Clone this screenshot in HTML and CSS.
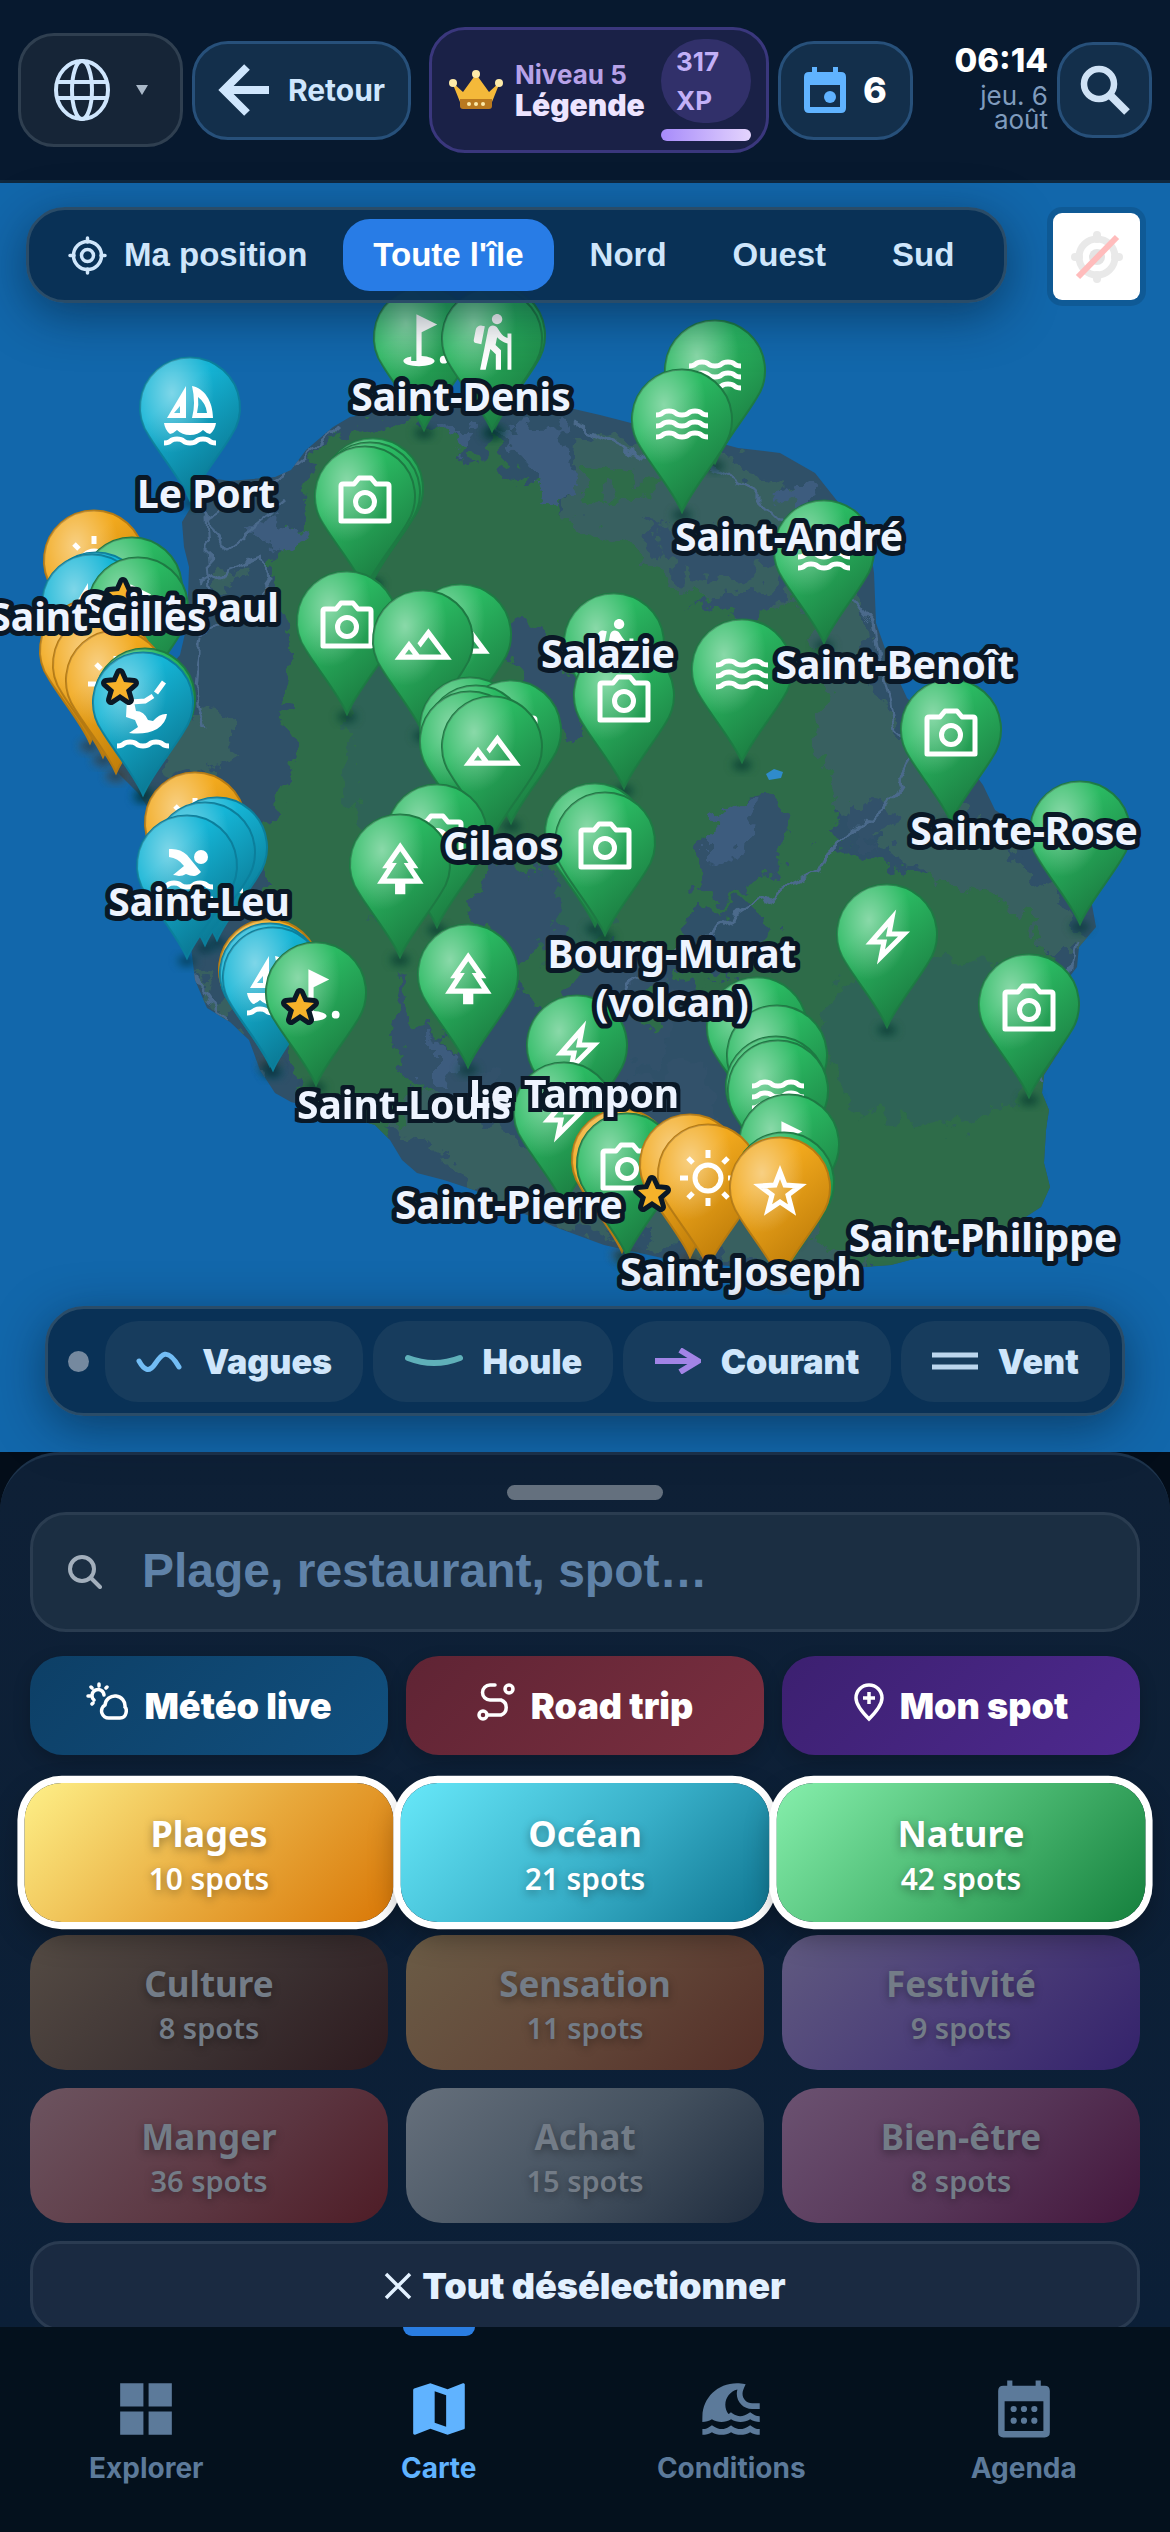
FILE: index.html
```html
<!DOCTYPE html>
<html lang="fr">
<head>
  <meta charset="UTF-8">
  <meta name="viewport" content="width=device-width, initial-scale=1">
  <title>Carte</title>
  <link rel="stylesheet" href="styles.css">
</head>
<body>

<header class="topbar">
  <button class="chip lang" aria-label="Langue">
    <svg width="56" height="64" viewBox="0 0 56 64" fill="none" stroke="currentColor" stroke-width="4">
      <ellipse cx="28" cy="32" rx="26" ry="29"/>
      <ellipse cx="28" cy="32" rx="10" ry="29"/>
      <path d="M4 24h48M4 40h48"/>
    </svg>
    <svg width="12" height="10" viewBox="0 0 12 10"><path d="M0 0h12L6 10z" fill="#a9b8c8"/></svg>
  </button>

  <a href="#" class="chip back">
    <svg width="52" height="52" viewBox="0 0 52 52" fill="none" stroke="currentColor" stroke-width="8"><path d="M51 26H6M29 3L6 26l23 23"/></svg>
    Retour
  </a>

  <div class="level">
    <svg width="54" height="40" viewBox="0 0 54 40">
      <path d="M3 12l11 10L27 4l13 18 11-10-8 20H11z" fill="#f4b93a"/>
      <path d="M11 29h32v7q0 3-3 3H14q-3 0-3-3z" fill="#b9791f"/>
      <g fill="#fdeaa8"><circle cx="4" cy="13" r="4"/><circle cx="27" cy="4" r="4"/><circle cx="50" cy="13" r="4"/><circle cx="20" cy="34" r="2"/><circle cx="27" cy="34" r="2"/><circle cx="34" cy="34" r="2"/></g>
    </svg>
    <div class="level-text">
      <span class="level-num">Niveau 5</span>
      <strong class="level-name">Légende</strong>
    </div>
    <div class="level-xp">
      <span class="xp">317 XP</span>
      <span class="xp-bar"></span>
    </div>
  </div>

  <button class="chip cal" aria-label="Agenda, 6 événements">
    <svg width="42" height="46" viewBox="0 0 42 46">
      <path d="M8 0h5v5h16V0h5v5h3q5 0 5 5v31q0 5-5 5H5q-5 0-5-5V10q0-5 5-5h3zM6 18v22h30V18z" fill="#60b3ff" fill-rule="evenodd"/>
      <circle cx="26" cy="30" r="6" fill="#60b3ff"/>
    </svg>
    6
  </button>

  <div class="clock">
    <strong>06:14</strong>
    <span>jeu. 6 août</span>
  </div>

  <button class="chip find" aria-label="Rechercher">
    <svg width="50" height="50" viewBox="0 0 50 50" fill="none" stroke="currentColor" stroke-width="6.500"><circle cx="19" cy="19" r="15"/><path d="M29 29l18 18" stroke-width="8"/></svg>
  </button>
</header>

<main class="map">
  <svg class="map-world" viewBox="0 183 1170 1269" preserveAspectRatio="xMidYMid slice" role="img" aria-label="Carte de La Réunion">
    <defs>
      <linearGradient id="green" x1="0" y1="0" x2="0.600" y2="1"><stop offset="0.350" stop-color="#2aba62"/><stop offset="1" stop-color="#1b7a40"/></linearGradient>
      <linearGradient id="blue" x1="0" y1="0" x2="0.600" y2="1"><stop offset="0.350" stop-color="#15b5d6"/><stop offset="1" stop-color="#0a7590"/></linearGradient>
      <linearGradient id="orange" x1="0" y1="0" x2="0.600" y2="1"><stop offset="0.350" stop-color="#f2a91d"/><stop offset="1" stop-color="#bd7b08"/></linearGradient>
      <radialGradient id="shine" cx="0.320" cy="0.250" r="0.420"><stop offset="0" stop-color="#fff" stop-opacity="0.450"/><stop offset="1" stop-color="#fff" stop-opacity="0"/></radialGradient>
      <filter id="soft" x="-50%" y="-50%" width="200%" height="200%"><feGaussianBlur stdDeviation="4"/></filter>
      <filter id="rough" x="-5%" y="-5%" width="110%" height="110%">
        <feTurbulence type="fractalNoise" baseFrequency="0.045" numOctaves="4" seed="4"/>
        <feDisplacementMap in="SourceGraphic" scale="46" xChannelSelector="R" yChannelSelector="G"/>
      </filter>
      <filter id="winding" x="-5%" y="-5%" width="110%" height="110%">
        <feTurbulence type="fractalNoise" baseFrequency="0.060" numOctaves="2" seed="9"/>
        <feDisplacementMap in="SourceGraphic" scale="18" xChannelSelector="R" yChannelSelector="G"/>
      </filter>
      <!-- one outline behind two labels that touch -->
      <filter id="outline" x="-5%" y="-20%" width="110%" height="140%" color-interpolation-filters="sRGB">
        <feMorphology in="SourceAlpha" operator="dilate" radius="4" result="fat"/>
        <feFlood flood-color="#0a1826"/>
        <feComposite in2="fat" operator="in"/>
        <feMerge><feMergeNode/><feMergeNode in="SourceGraphic"/></feMerge>
      </filter>
      <clipPath id="land"><use href="#coast"/></clipPath>

      <path id="shape" d="M0 141C-8 122-29 97-41 77A50 50 0 1 1 41 77C29 97 8 122 0 141z"/>
      <g id="pin">
        <ellipse cx="0" cy="144" rx="10" ry="6" fill="#04202c" opacity="0.600" filter="url(#soft)"/>
        <use href="#shape" stroke-width="2"/>
        <use href="#shape" fill="url(#shine)" stroke="none"/>
      </g>
      <g id="g" fill="url(#green)" stroke="#1d7a43"><use href="#pin"/></g>
      <g id="b" fill="url(#blue)" stroke="#0b7f9c"><use href="#pin"/></g>
      <g id="o" fill="url(#orange)" stroke="#b57a12"><use href="#pin"/></g>

      <path id="wave" d="M-26 3q4.500 0 6.500-2t6.500-2 6.500 2 6.500 2 6.500-2 6.500-2 6.500 2 6.500 2" fill="none" stroke="#fff" stroke-width="5"/>
      <g id="waves"><use href="#g"/><use href="#wave" y="41"/><use href="#wave" y="52"/><use href="#wave" y="63"/></g>
      <g id="camera"><use href="#g"/><path d="M-22 36h11l5-6H6l5 6h11q2 0 2 2v35h-48V38q0-2 2-2z" fill="none" stroke="#fff" stroke-width="5" stroke-linejoin="round"/><circle cy="54" r="9.500" fill="none" stroke="#fff" stroke-width="5"/></g>
      <g id="mountain"><use href="#g"/><path transform="translate(-31 21) scale(2.600)" fill="#fff" d="M14 6l-4.220 5.630 1.250 1.670L14 9.330 19 16h-8.460l-4.010-5.370L1 18h22L14 6zM5 16l1.520-2.030L8.040 16H5z"/></g>
      <g id="tree"><use href="#g"/><path transform="translate(-31 21) scale(2.600)" fill="#fff" d="M17 12h2L12 2 5.050 12H7l-3.900 6h6.920v4h3.950v-4H21l-4-6zM6.790 16l3.900-6H8.880l3.130-4.500 3.150 4.500h-1.810l3.900 6H6.790z"/></g>
      <g id="bolt"><use href="#g"/><path transform="translate(0 52)" d="M5-20L2-4h15L-6 19l3-15h-13z" fill="none" stroke="#fff" stroke-width="5"/></g>
      <g id="hiking"><use href="#g"/><path transform="translate(-30 20) scale(2.600)" fill="#fff" d="M13.500 5.500c1.100 0 2-.9 2-2s-.9-2-2-2-2 .9-2 2 .9 2 2 2zm4 5.280c-1.230-.37-2.220-1.170-2.800-2.180l-1-1.600c-.41-.65-1.110-1-1.840-1-.78 0-1.590.5-1.780 1.440S7 23 7 23h2.100l1.800-8 2.100 2v6h2v-7.500l-2.100-2 .6-3c1 1.150 2.410 2.010 4 2.340V23H19V9h-1.500v1.780zM7.430 13.130l-2.120-.41c-.54-.11-.9-.63-.79-1.170l.76-3.930c.21-1.080 1.260-1.790 2.340-1.580l1.160.23-1.350 6.860z"/></g>
      <g id="golf"><use href="#g"/><g transform="translate(-31 20) scale(2.600)" fill="#fff"><circle cx="19.500" cy="19.500" r="1.500"/><path d="M17 5.920L9 2v18H7v-1.730c-1.790.35-3 .99-3 1.730 0 1.100 2.690 2 6 2s6-.9 6-2c0-.99-2.160-1.810-5-1.970V8.980l6-3.060z"/></g></g>
      <g id="boat"><use href="#b"/><g transform="translate(0 58)"><path d="M-4-31v32h-19zM-10-11l-6 7h6zM2-31C14-29 23-16 23 1H2q4-15 0-32zM8-20q1 8-1 16h10Q16-14 8-20z" fill="#fff" fill-rule="evenodd"/><path d="M-26 6h52q-1 7-6 11-4-1-7-4-5 5-13 5t-13-5q-3 3-7 4-5-4-6-11z" fill="#fff"/><use href="#wave" y="23"/></g></g>
      <g id="swim"><use href="#b"/><circle cx="14" cy="40" r="7" fill="#fff"/><path d="M-18 32q11-1 18 6l14 17q-4 4-7 4-4 0-8-2-3 2-7 2-4-1-6-1l11-9q-6-8-15-9z" fill="#fff"/><use href="#wave" y="67"/><use href="#wave" y="79"/></g>
      <g id="kite"><use href="#b"/><path d="M21 28l-8 11M10 42l-8 5-14 1" fill="none" stroke="#fff" stroke-width="5"/><path d="M-16 44l6-1 3 14q8 0 12 9l5 1q7-8 14-7-1 9-10 15-11 6-28 4l9-6-3-7-9-3z" fill="#fff"/><use href="#wave" y="89"/></g>
      <g id="sun"><use href="#o"/><circle cy="52" r="13" fill="none" stroke="#fff" stroke-width="5"/><path d="M0 24v8M0 72v8M-28 52h8M20 52h8M-20 32l5 5M15 67l5 5M20 32l-5 5M-15 67l-5 5" stroke="#fff" stroke-width="5"/></g>
      <g id="star"><use href="#o"/><path d="M0 33l5 13 15 1-12 9 4 15L0 63l-12 8 4-15-12-9 15-1z" fill="none" stroke="#fff" stroke-width="5"/></g>
      <path id="fav" d="M0-14l4 9 10 1-8 7 3 10-9-6-9 6 3-10-8-7 10-1z" fill="#f6b22a" stroke="#0a1826" stroke-width="10" stroke-linejoin="round" paint-order="stroke"/>
    </defs>

    <rect y="183" width="1170" height="1269" fill="#1267ab"/>
    <path id="coast" fill="#2f5068" d="M350 417L333 427 306 450 291 470 275 477 230 481 210 478 188 512 182 522 184 547 189 567 187 625 180 655 150 690 96 735 110 765 138 793 153 815 175 880 191 947 195 980 207 1008 230 1022 249 1040 260 1070 275 1093 291 1102 330 1112 375 1125 390 1140 402 1160 417 1173 444 1180 474 1190 520 1212 555 1227 604 1245 680 1262 780 1270 865 1267 891 1265 910 1260 970 1248 1021 1220 1041 1207 1050 1187 1044 1163 1046 1130 1049 1110 1042 1093 1044 1075 1062 1047 1058 1010 1067 980 1077 967 1079 947 1096 927 1092 905 1060 850 1020 826 995 810 983 785 950 740 907 698 888 657 876 623 874 573 870 545 838 502 815 473 780 453 738 448 690 435 631 423 600 415 574 409 494 405 400 408z"/>
    <g clip-path="url(#land)">
      <g filter="url(#rough)">
        <path fill="#386160" d="M575 430l80 10 50 10 70 30 60 60 20 60 10 70 50 80 80 90 70 60 20 50-60 0-240-180-60-140-160-60zM190 710l40 10 5 40-50 20-40-30zM215 570l25 5-5 20-30-5zM195 960l20 30 30 60-30-20zM320 1000l60 60 100 60 100 60 40 60-130-40-60-60-60-10-60-60zM640 1150l200 20 200 30-30 30-160 40-200-20z"/>
        <path fill="#2d6c49" d="M322 440l30-15 110 5 10 45 20-40 30 55 30-30 20 70 60 20 40 30 70 40 80-30 30 0-40 50 20 40-20 60 30 60-20 40 80 30 110 30 40 60 20 80-10 60-10 60 0 120-30 30-110 10-50-60-40-10-20-60-20-60-10-60-80-60 10-20 60-30 10-40-30-20-40 10-50 70-40 60-50-20-60-40-40 40-30 60-60 80-40 60-20-30-10-50-10-80-20-80 10-60-20-30 0-60 40-70-20-60 10-70-20-60z"/>
        <path fill="#2f6456" d="M350 670l60-50 90 110-30 60-60 60-10 70-30 0 10-60-30-60zM880 965l110-5 40 70-10 70-60 30-110-20-30-60 10-60zM540 880l50-20 30 60-50 50-40-30z"/>
        <path fill="#30516b" d="M640 525l50 10 80 0 20 20-60 30-50-10zM690 610l50-20 70-20-50 50zM500 625l50 5 30 60-30 20-30-40zM490 860l60 10 20 60-60 30-40-50zM590 950l60-10 30 60-10 40-70 60-60 10 10-60zM700 840l60-50 30 20-10 60-60 30-30-10zM620 1080l80-20 20 60-50 40-50-30zM850 800l50 10-20 40-30-10zM530 660l50 20 10 60-30 10zM400 970l20 60 90 60-60 20-60-50z"/>
        <path fill="#3d5c7e" d="M250 520l60 10-10 20-50-10zM445 425l20 0 5 30-20-10zM500 430l60-5 15 70-20 10-30-40zM710 825l50-30-20 50-30 20zM790 480l30 10-10 30-30-20zM430 1040l30 20-10 30-20-10zM640 1120l20 5 0 30-20-10z"/>
        <path fill="#2d6c49" d="M580 470l80 10-20 20-60-10zM620 1010l50-30-20 50zM680 970l40 0-20 50zM560 1060l30 20-20 20z"/>
      </g>
      <path d="M336 428q-40 40-80 60l-50 30 6 90-12 30 50-30 20-30-10-20-60 25M574 425l70 30 60 8 40 20 80 80 50 60 20 110 24 20-30 50-60 50-10 20-60 30-80 50-50 30-24 60M191 970l40 60 50 80 100 40 60 50 40 40 120 35 180 15 200-10 74-40 20-60-16-130M205 510l20 40 60-50M200 640l-5 50 10 40M1062 1000l14-60M1040 1080l20-50" fill="none" stroke="#4b6b8c" stroke-width="3" stroke-linejoin="round" filter="url(#winding)"/>
      <path d="M766 774l8-5 9 3-2 6-12 2z" fill="#2f8bcb"/>
    </g>

    <g class="pins">
      <use href="#golf" x="424" y="289"/>
      <use href="#g" x="495" y="287"/>
      <use href="#hiking" x="492" y="290"/>
      <use href="#waves" x="715" y="322"/>
      <use href="#boat" x="190" y="359"/>
      <use href="#waves" x="682" y="371"/>
      <use href="#g" x="373" y="440"/>
      <use href="#g" x="370" y="444"/>
      <use href="#camera" x="365" y="448"/>
      <use href="#waves" x="824" y="502"/>
      <use href="#sun" x="94" y="512"/>
      <use href="#g" x="132" y="539"/>
      <use href="#b" x="96" y="554"/>
      <use href="#boat" x="92" y="556"/>
      <use href="#golf" x="138" y="559"/>
      <use href="#camera" x="347" y="573"/>
      <use href="#mountain" x="461" y="586"/>
      <use href="#mountain" x="423" y="592"/>
      <use href="#hiking" x="614" y="595"/>
      <use href="#sun" x="90" y="602"/>
      <use href="#sun" x="103" y="616"/>
      <use href="#waves" x="742" y="621"/>
      <use href="#sun" x="116" y="632"/>
      <use href="#camera" x="624" y="647"/>
      <use href="#g" x="145" y="650"/>
      <use href="#kite" x="143" y="654"/>
      <use href="#g" x="470" y="679"/>
      <use href="#camera" x="951" y="681"/>
      <use href="#camera" x="511" y="682"/>
      <use href="#g" x="476" y="687"/>
      <use href="#g" x="470" y="693"/>
      <use href="#mountain" x="492" y="698"/>
      <use href="#sun" x="195" y="774"/>
      <use href="#g" x="1080" y="783"/>
      <use href="#g" x="595" y="785"/>
      <use href="#camera" x="437" y="786"/>
      <use href="#camera" x="605" y="794"/>
      <use href="#kite" x="217" y="799"/>
      <use href="#b" x="205" y="804"/>
      <use href="#tree" x="400" y="816"/>
      <use href="#swim" x="187" y="817"/>
      <use href="#bolt" x="887" y="886"/>
      <use href="#o" x="269" y="921"/>
      <use href="#b" x="270" y="925"/>
      <use href="#tree" x="468" y="926"/>
      <use href="#boat" x="273" y="929"/>
      <use href="#golf" x="316" y="944"/>
      <use href="#camera" x="1029" y="956"/>
      <use href="#mountain" x="757" y="979"/>
      <use href="#bolt" x="577" y="997"/>
      <use href="#g" x="777" y="1007"/>
      <use href="#g" x="776" y="1038"/>
      <use href="#waves" x="778" y="1042"/>
      <use href="#bolt" x="564" y="1064"/>
      <use href="#golf" x="789" y="1096"/>
      <use href="#o" x="622" y="1111"/>
      <use href="#camera" x="627" y="1115"/>
      <use href="#sun" x="690" y="1116"/>
      <use href="#sun" x="708" y="1126"/>
      <use href="#g" x="784" y="1134"/>
      <use href="#star" x="780" y="1139"/>
    </g>
    <use href="#fav" x="123" y="596"/>

    <g class="towns">
      <text x="461" y="411">Saint-Denis</text>
      <text x="206" y="508">Le Port</text>
      <text x="181" y="622">Saint-Paul</text>
      <text x="98" y="631">Saint-Gilles</text>
      <text x="789" y="551">Saint-André</text>
      <text x="608" y="668">Salazie</text>
      <text x="895" y="679">Saint-Benoît</text>
      <text x="1024" y="845">Sainte-Rose</text>
      <text x="501" y="860">Cilaos</text>
      <text x="199" y="916">Saint-Leu</text>
      <text x="672" y="968">Bourg-Murat<tspan x="672" dy="49">(volcan)</tspan></text>
      <text x="509" y="1219">Saint-Pierre</text>
      <text x="983" y="1252">Saint-Philippe</text>
      <text x="741" y="1286">Saint-Joseph</text>
    </g>
    <g class="towns shared" filter="url(#outline)">
      <text x="404" y="1119">Saint-Louis</text>
      <text x="574" y="1108">Le Tampon</text>
    </g>
    <use href="#fav" x="120" y="687"/>
    <use href="#fav" x="300" y="1007"/>
    <use href="#fav" x="652" y="1194"/>
  </svg>

  <nav class="zones" aria-label="Zones">
    <button class="zone">
      <svg width="39" height="39" viewBox="0 0 39 39" fill="none" stroke="currentColor" stroke-width="3.500" stroke-linecap="round"><circle cx="19.500" cy="19.500" r="14"/><circle cx="19.500" cy="19.500" r="6"/><path d="M19.500 2v4M19.500 33v4M2 19.500h4M33 19.500h4"/></svg>
      Ma position
    </button>
    <button class="zone active">Toute l'île</button>
    <button class="zone">Nord</button>
    <button class="zone">Ouest</button>
    <button class="zone">Sud</button>
  </nav>

  <button class="locate" aria-label="Localisation désactivée">
    <svg width="54" height="54" viewBox="0 0 54 54" fill="none">
      <g stroke="#e9e9e9"><circle cx="27" cy="27" r="18" stroke-width="7"/><path d="M27 5v4M27 45v4M5 27h4M45 27h4" stroke-width="8" stroke-linecap="round"/></g>
      <circle cx="27" cy="27" r="8" fill="#e4e4e4"/>
      <path d="M8 47L47 7" stroke="#ffbcbc" stroke-width="6"/>
    </svg>
  </button>

  <div class="layers">
    <span class="layers-dot"></span>
    <button class="layer"><svg width="46" height="26" viewBox="0 0 46 26" fill="none" stroke="#72bdf5" stroke-width="5" stroke-linecap="round"><path d="M3 13c5 9 10 12 16 3S31-2 43 19"/></svg>Vagues</button>
    <button class="layer"><svg width="58" height="26" viewBox="0 0 58 26" fill="none" stroke="#5fb0b9" stroke-width="6" stroke-linecap="round"><path d="M3 10q26 10 52 0"/></svg>Houle</button>
    <button class="layer"><svg width="46" height="26" viewBox="0 0 46 26" fill="none" stroke="#a284e6" stroke-width="6"><path d="M0 13h42M25 2l18 11-18 11"/></svg>Courant</button>
    <button class="layer"><svg width="46" height="26" viewBox="0 0 46 26" fill="none" stroke="#bcd6ee" stroke-width="5"><path d="M0 7h46M0 19h46"/></svg>Vent</button>
  </div>
</main>

<div class="sheet-wrap">
  <section class="sheet">
    <div class="handle"></div>

    <label class="search">
      <svg width="34" height="34" viewBox="0 0 34 34" fill="none" stroke="#a3afbc" stroke-width="4" stroke-linecap="round"><circle cx="14" cy="14" r="12"/><path d="M23 23l9 9"/></svg>
      <input type="search" placeholder="Plage, restaurant, spot…" aria-label="Rechercher un lieu">
    </label>

    <div class="actions">
      <button class="action weather">
        <svg width="42" height="48" viewBox="0 0 42 48" fill="none" stroke="currentColor" stroke-width="3.500" stroke-linecap="round"><path d="M8 18a6 6 0 1 1 10-5M2 14h2M13 2v2M5 5l1 1M21 5l-1 1M6 22l1-1M23 36a7 7 0 0 1-4-13 10 10 0 0 1 20 2q2 2 1 6-1 5-6 5z"/></svg>
        Météo live
      </button>
      <button class="action trip">
        <svg width="38" height="48" viewBox="0 0 38 48" fill="none" stroke="currentColor" stroke-width="3.500" stroke-linecap="round"><circle cx="6" cy="33" r="4"/><circle cx="32" cy="7" r="4"/><path d="M11 33h13a8 8 0 0 0 0-15H13a7 7 0 0 1 0-15h5"/></svg>
        Road trip
      </button>
      <button class="action spot">
        <svg width="30" height="48" viewBox="0 0 30 48" fill="none" stroke="currentColor" stroke-width="3.500"><path d="M15 37Q2 24 2 16a13 13 0 0 1 26 0q0 8-13 21zM15 10v12M9 16h12"/></svg>
        Mon spot
      </button>
    </div>

    <div class="categories">
      <button class="cat plages selected"><b>Plages</b><span>10 spots</span></button>
      <button class="cat ocean selected"><b>Océan</b><span>21 spots</span></button>
      <button class="cat nature selected"><b>Nature</b><span>42 spots</span></button>
      <button class="cat culture"><b>Culture</b><span>8 spots</span></button>
      <button class="cat sensation"><b>Sensation</b><span>11 spots</span></button>
      <button class="cat festivite"><b>Festivité</b><span>9 spots</span></button>
      <button class="cat manger"><b>Manger</b><span>36 spots</span></button>
      <button class="cat achat"><b>Achat</b><span>15 spots</span></button>
      <button class="cat bienetre"><b>Bien-être</b><span>8 spots</span></button>
    </div>

    <button class="clear">
      <svg width="28" height="28" viewBox="0 0 28 28" stroke="currentColor" stroke-width="3.500"><path d="M2 2l24 24M26 2L2 26"/></svg>
      Tout désélectionner
    </button>
  </section>
</div>

<nav class="tabs" aria-label="Navigation">
  <a href="#" class="tab">
    <svg width="62" height="62" viewBox="0 0 24 24" fill="currentColor"><path d="M2 2h9v9H2zM13 2h9v9h-9zM2 13h9v9H2zM13 13h9v9h-9z"/></svg>
    Explorer
  </a>
  <a href="#" class="tab current">
    <svg width="62" height="62" viewBox="0 0 24 24" fill="currentColor"><path transform="translate(-1.330 -1.330) scale(1.110)" d="M20.500 3l-.16.03L15 5.100 9 3 3.360 4.900c-.21.07-.36.25-.36.48V20.500c0 .28.22.5.5.5l.16-.03L9 18.900l6 2.100 5.640-1.900c.21-.07.36-.25.36-.48V3.500c0-.28-.22-.5-.5-.5zM14.500 18.200l-4-1.400V5.800l4 1.400z"/></svg>
    Carte
  </a>
  <a href="#" class="tab">
    <svg width="62" height="62" viewBox="0 0 24 24" fill="currentColor"><path transform="translate(-1.300 -1.300) scale(1.110)" d="M18.670 17.630c-3.800 2.800-6.120.4-6.670 0-.66.49-2.920 2.760-6.670 0C3.430 19.030 2.650 19 2 19v2c1.160 0 2.300-.32 3.330-.93 2.060 1.220 4.610 1.220 6.670 0 2.060 1.220 4.610 1.220 6.670 0 1.030.61 2.170.93 3.330.93v-2c-.66 0-1.500-.03-3.330-1.370zM19.330 12H22v-2h-2.670C17.500 10 16 8.500 16 6.670c0-1.020.38-1.740 1.090-3.340C15.720 3.120 15.090 3 14 3 7.360 3 2.150 8.030 2.010 14.500c0 0-.01 2-.01 2 1.160 0 2.300-.32 3.330-.93 2.060 1.220 4.610 1.220 6.670 0 2.060 1.220 4.610 1.220 6.670 0 1.030.61 2.170.93 3.330.93v-2c-.66 0-1.500-.03-3.330-1.370-3.800 2.800-6.120.4-6.670 0-.9.67-.54.41-.91.63-.7-.94-1.090-2.060-1.090-3.260 0-2.580 1.770-4.740 4.210-5.330-.13.51-.21 1.020-.21 1.500C14 9.610 16.390 12 19.330 12z"/></svg>
    Conditions
  </a>
  <a href="#" class="tab">
    <svg width="62" height="62" viewBox="0 0 24 24" fill="currentColor"><path fill-rule="evenodd" d="M5.500 1h2v2h9V1h2v2H20q2 0 2 2v16q0 2-2 2H4q-2 0-2-2V5q0-2 2-2h1.500zM4.500 9v11.500h15V9z"/><g><circle cx="8" cy="12" r="1.200"/><circle cx="12" cy="12" r="1.200"/><circle cx="16" cy="12" r="1.200"/><circle cx="8" cy="16.500" r="1.200"/><circle cx="12" cy="16.500" r="1.200"/><circle cx="16" cy="16.500" r="1.200"/></g></svg>
    Agenda
  </a>
</nav>

</body>
</html>
```
FILE: styles.css
```css
* {
  box-sizing: border-box;
}

body {
  margin: 0;
  height: 100vh;
  display: flex;
  flex-direction: column;
  overflow: hidden;
  background: #04101d;
  color: #cfe6fb;
  font-family: Inter, sans-serif;
}

button {
  margin: 0;
  padding: 0;
  border: none;
  background: none;
  color: inherit;
  font-family: inherit;
  cursor: pointer;
}

a {
  color: inherit;
  text-decoration: none;
}

svg {
  display: block;
  flex: none;
}

/* top bar */
.topbar {
  display: flex;
  align-items: center;
  gap: 9px;
  flex: none;
  height: 183px;
  padding: 0 18px;
  background: #07192f;
  border-bottom: 3px solid #10283d;
}

.chip {
  display: flex;
  align-items: center;
  justify-content: center;
  flex: none;
  height: 99px;
  border: 3px solid #27507a;
  border-radius: 36px;
  background: #132f4b;
  color: #cfe6fd;
  font-size: 30px;
  font-weight: 700;
}

.lang {
  width: 165px;
  height: 114px;
  gap: 26px;
  border-color: #2f3f50;
  background: #162537;
}

.back {
  width: 219px;
  gap: 18px;
  margin-right: 9px;
}

.level {
  display: flex;
  align-items: center;
  gap: 12px;
  flex: none;
  width: 340px;
  height: 126px;
  padding: 0 15px 0 17px;
  border: 3px solid #3a377d;
  border-radius: 36px;
  background: #1a2147;
}

.level-text {
  display: flex;
  flex-direction: column;
  flex: 1;
  line-height: 30px;
}

.level-num {
  color: #b7a2e8;
  font-size: 26px;
  font-weight: 700;
}

.level-name {
  color: #ede4ff;
  font-size: 30px;
  font-weight: 900;
}

.level-xp {
  width: 90px;
}

.xp {
  display: block;
  padding: 3px 15px;
  border-radius: 42px;
  background: #31306a;
  color: #c3b0f7;
  font-size: 26px;
  font-weight: 700;
  line-height: 39px;
}

.xp-bar {
  display: block;
  height: 12px;
  margin-top: 6px;
  border-radius: 6px;
  background: linear-gradient(90deg, #a78bfa, #e4d4fd);
}

.cal {
  width: 135px;
  gap: 17px;
  color: #fff;
  font-size: 36px;
  font-weight: 800;
}

.clock {
  flex: 1;
  min-width: 0;
  padding-left: 30px;
  text-align: right;
  color: #7f9bbd;
  font-size: 26px;
  line-height: 24px;
}

.clock strong {
  display: block;
  margin-bottom: 12px;
  color: #fff;
  font-size: 33px;
  font-weight: 800;
}

.find {
  width: 95px;
  height: 96px;
  color: #cfe2f5;
}

/* map */
.map {
  position: relative;
  flex: 1;
  min-height: 0;
  background: #1267ab;
}

.map-world {
  position: absolute;
  top: 0;
  left: 0;
  width: 100%;
  height: 100%;
}

.towns {
  fill: #eef4ff;
  stroke: #0a1826;
  stroke-width: 10px;
  stroke-linejoin: round;
  paint-order: stroke;
  text-anchor: middle;
  font-family: "Noto Sans", sans-serif;
  font-size: 39px;
  font-weight: 700;
}

.towns.shared {
  stroke: none;
}

.zones,
.layers {
  position: absolute;
  display: flex;
  align-items: center;
  border: 3px solid #2a4c68;
  border-radius: 39px;
  background: rgba(9, 48, 83, 0.970);
  box-shadow: 0 12px 48px rgba(4, 24, 44, 0.500);
}

.zones {
  top: 24px;
  left: 26px;
  gap: 6px;
  padding: 9px 20px 9px 9px;
}

.zone {
  display: flex;
  align-items: center;
  gap: 17px;
  height: 72px;
  padding: 0 30px;
  border-radius: 27px;
  font-family: "Liberation Sans", Arial, sans-serif;
  font-size: 33px;
  font-weight: 700;
}

.zone.active {
  background: #287ce6;
  color: #fff;
}

.locate {
  position: absolute;
  top: 30px;
  right: 30px;
  display: flex;
  align-items: center;
  justify-content: center;
  width: 87px;
  height: 87px;
  border-radius: 9px;
  background: #fff;
  box-shadow: 0 0 0 6px rgba(0, 0, 0, 0.120);
}

.layers {
  right: 45px;
  bottom: 36px;
  left: 45px;
  gap: 10px;
  height: 110px;
  padding: 0 12px 0 20px;
}

.layers-dot {
  width: 21px;
  height: 21px;
  margin-right: 6px;
  border-radius: 50%;
  background: #75899f;
}

.layer {
  display: flex;
  align-items: center;
  justify-content: center;
  flex: 1 1 auto;
  gap: 20px;
  height: 81px;
  padding: 0 12px;
  border-radius: 33px;
  background: #173c5d;
  font-size: 34px;
  font-weight: 900;
}

/* bottom sheet */
.sheet-wrap {
  flex: none;
  height: 875px;
  overflow: hidden;
  background: #030d19;
}

.sheet {
  padding: 30px 30px 0;
  border-top: 3px solid #1d334b;
  border-radius: 60px 60px 0 0;
  background: linear-gradient(180deg, #0e2036, #0b1f37);
}

.handle {
  width: 156px;
  height: 15px;
  margin: 0 auto 12px;
  border-radius: 8px;
  background: #64707e;
}

.search {
  display: flex;
  align-items: center;
  gap: 40px;
  height: 120px;
  padding: 0 35px;
  border: 3px solid #2a3c50;
  border-radius: 36px;
  background: #1b2e42;
}

.search input {
  flex: 1;
  min-width: 0;
  padding: 0 0 4px;
  border: none;
  outline: none;
  background: none;
  color: #fff;
  font-family: "Liberation Sans", Arial, sans-serif;
  font-size: 48px;
  font-weight: 700;
}

.search input::placeholder {
  color: #5f82a8;
  opacity: 1;
}

.actions,
.categories {
  display: grid;
  grid-template-columns: repeat(3, 1fr);
  gap: 18px;
}

.actions {
  margin: 24px 0 27px;
}

.action {
  display: flex;
  align-items: center;
  justify-content: center;
  gap: 16px;
  height: 99px;
  border-radius: 33px;
  box-shadow: 0 6px 18px rgba(0, 0, 0, 0.200);
  color: #fff;
  font-size: 36px;
  font-weight: 900;
}

.weather {
  background: linear-gradient(135deg, #0d3f66, #11507f);
}

.trip {
  background: linear-gradient(135deg, #5f2434, #7b2f40);
}

.spot {
  background: linear-gradient(135deg, #3c2070, #4e298f);
}

.cat {
  display: flex;
  flex-direction: column;
  align-items: center;
  justify-content: center;
  height: 135px;
  padding-top: 6px;
  border-radius: 36px;
  color: #737c87;
  font-family: "Noto Sans", sans-serif;
  text-shadow: 0 3px 9px rgba(0, 0, 0, 0.350);
}

.cat b {
  font-size: 35px;
  font-weight: 700;
  line-height: 45px;
}

.cat span {
  font-size: 29px;
  font-weight: 600;
  line-height: 44px;
}

.cat.selected {
  color: #fff;
  transform: translateY(3px) scale(1.030);
  box-shadow: 0 0 0 7px #fff, 0 12px 30px rgba(0, 0, 0, 0.400);
}

.plages { background: linear-gradient(135deg, #fef088, #e8a93c 55%, #d97706); }
.ocean { background: linear-gradient(135deg, #67e8f9, #38afc8 55%, #0e7490); }
.nature { background: linear-gradient(135deg, #86efac, #46b46d 55%, #15803d); }
.culture { background: linear-gradient(135deg, #544b44, #3a2f30 60%, #2d1a1e); }
.sensation { background: linear-gradient(135deg, #6b5c46, #624638 55%, #532e27); }
.festivite { background: linear-gradient(135deg, #605a80, #493b77 55%, #34226b); }
.manger { background: linear-gradient(135deg, #6c5460, #5b3540 60%, #4e1c26); }
.achat { background: linear-gradient(135deg, #66707c, #44515f 55%, #1f2c3e); }
.bienetre { background: linear-gradient(135deg, #6b5271, #563557 55%, #44163c); }

.clear {
  display: flex;
  align-items: center;
  justify-content: center;
  gap: 10px;
  width: 100%;
  height: 90px;
  margin-top: 18px;
  border: 3px solid #2a3b51;
  border-radius: 30px;
  background: #1a2a41;
  color: #e3f1ff;
  font-size: 36px;
  font-weight: 900;
}

/* tab bar */
.tabs {
  display: grid;
  grid-template-columns: repeat(4, 1fr);
  flex: none;
  height: 205px;
  background: #04111d;
}

.tab {
  position: relative;
  display: flex;
  flex-direction: column;
  align-items: center;
  gap: 11px;
  padding-top: 51px;
  color: #5c7a9a;
  font-size: 28px;
  font-weight: 700;
  line-height: 34px;
}

.tab.current {
  color: #60b3ff;
}

.tab.current::before {
  content: "";
  position: absolute;
  top: 0;
  width: 72px;
  height: 9px;
  border-radius: 0 0 9px 9px;
  background: #2a7de1;
}
```
